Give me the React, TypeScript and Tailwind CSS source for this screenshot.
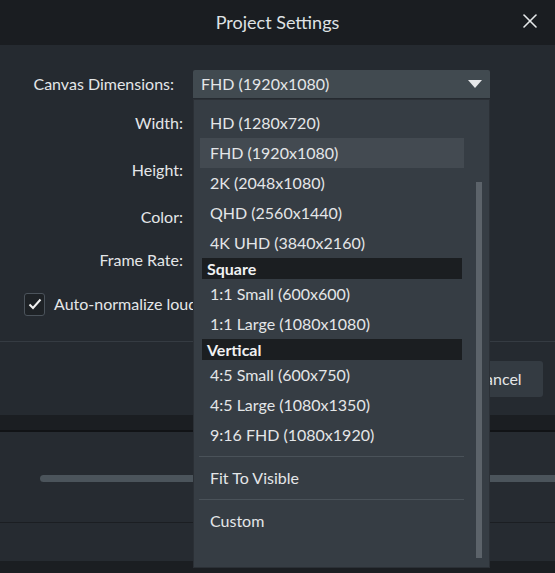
import React from "react";
import { X } from "lucide-react";

const items: { label: string; kind?: "head" | "sep" | "sel" }[] = [
  { label: "HD (1280x720)" },
  { label: "FHD (1920x1080)", kind: "sel" },
  { label: "2K (2048x1080)" },
  { label: "QHD (2560x1440)" },
  { label: "4K UHD (3840x2160)" },
  { label: "Square", kind: "head" },
  { label: "1:1 Small (600x600)" },
  { label: "1:1 Large (1080x1080)" },
  { label: "Vertical", kind: "head" },
  { label: "4:5 Small (600x750)" },
  { label: "4:5 Large (1080x1350)" },
  { label: "9:16 FHD (1080x1920)" },
  { label: "", kind: "sep" },
  { label: "Fit To Visible" },
  { label: "", kind: "sep" },
  { label: "Custom" },
];

export default function App() {
  return (
    <div className="relative w-[555px] h-[573px] overflow-hidden bg-[#252a30] text-[#e4e6e8] text-[16px]" style={{ fontFamily: "Lato, 'Open Sans', sans-serif" }}>
      <div className="h-[45px] bg-[#1a1d21] flex items-center justify-center relative">
        <span className="text-[18px] text-[#dfe2e4]">Project Settings</span>
        <X className="absolute right-[13px] top-[9px] w-[24px] h-[24px] text-[#e6e8ea]" strokeWidth={1.6} />
      </div>
      <div className="h-[297px] border-b border-[#353b42] pt-[25px]">
        <div className="flex items-center h-[28px]">
          <span className="w-[183px] text-right pr-[9px]">Canvas Dimensions:</span>
          <div className="ml-[10px] w-[297px] h-[28px] bg-[#414a50] rounded-t-[2px] flex items-center justify-between px-[8px]">
            <span>FHD (1920x1080)</span>
            <span className="w-0 h-0 border-l-[7px] border-r-[7px] border-t-[8px] border-l-transparent border-r-transparent border-t-[#e6e8ea]" />
          </div>
        </div>
        <div className="flex flex-col mt-[13px]">
          {["Width:", "Height:", "Color:", "Frame Rate:"].map((l, i) => (
            <div key={l} className={`w-[183px] text-right h-[24px] ${i === 0 ? "" : i === 3 ? "mt-[19px]" : "mt-[23px]"}`}>{l}</div>
          ))}
        </div>
        <div className="flex items-center mt-[20px] ml-[24px] gap-[9px]">
          <div className="w-[21px] h-[23px] rounded-[3px] border border-[#4b535b] bg-[#1e2226] flex items-center justify-center">
            <svg width="14" height="12" viewBox="0 0 14 12"><path d="M1.5 6.5 L5 10 L12.5 1.5" fill="none" stroke="#f2f2f2" strokeWidth="2" /></svg>
          </div>
          <span>Auto-normalize loudness</span>
        </div>
      </div>
      <div className="h-[73px] flex items-center justify-end pr-[12px]">
        <div className="w-[90px] h-[36px] bg-[#343b42] rounded-[3px] flex items-center justify-center">Cancel</div>
      </div>
      <div className="h-[17px] bg-[#1b1e22] border-b-[2px] border-[#111316]" />
      <div className="h-[91px] bg-[#262b31] border-b border-[#1b1e22] pt-[43px] pl-[40px]">
        <div className="h-[7px] w-[540px] rounded-full bg-[#4b545b]" />
      </div>
      <div className="h-[38px] bg-[#262b31]" />
      <div className="h-[12px] bg-[#1b1e22]" />

      <div className="absolute left-[193px] top-[99px] w-[297px] h-[469px] bg-[#363d44] border border-[#2b3036] pt-[8px]">
        {items.map((it, i) =>
          it.kind === "sep" ? (
            <div key={i} className="mx-[5px] my-[6px] h-[1px] bg-[#4a5259] w-[265px]" />
          ) : it.kind === "head" ? (
            <div key={i} className="ml-[8px] w-[260px] h-[21px] bg-[#1b1e21] pl-[5px] font-bold text-[16px] leading-[21px] text-[#f0f1f2]">{it.label}</div>
          ) : (
            <div key={i} className={`ml-[6px] w-[264px] h-[30px] pl-[10px] leading-[30px] ${it.kind === "sel" ? "bg-[#434a51]" : ""}`}>{it.label}</div>
          )
        )}
        <div className="absolute left-[282px] top-[82px] w-[6px] h-[376px] bg-[#5c636a]" />
      </div>
    </div>
  );
}
